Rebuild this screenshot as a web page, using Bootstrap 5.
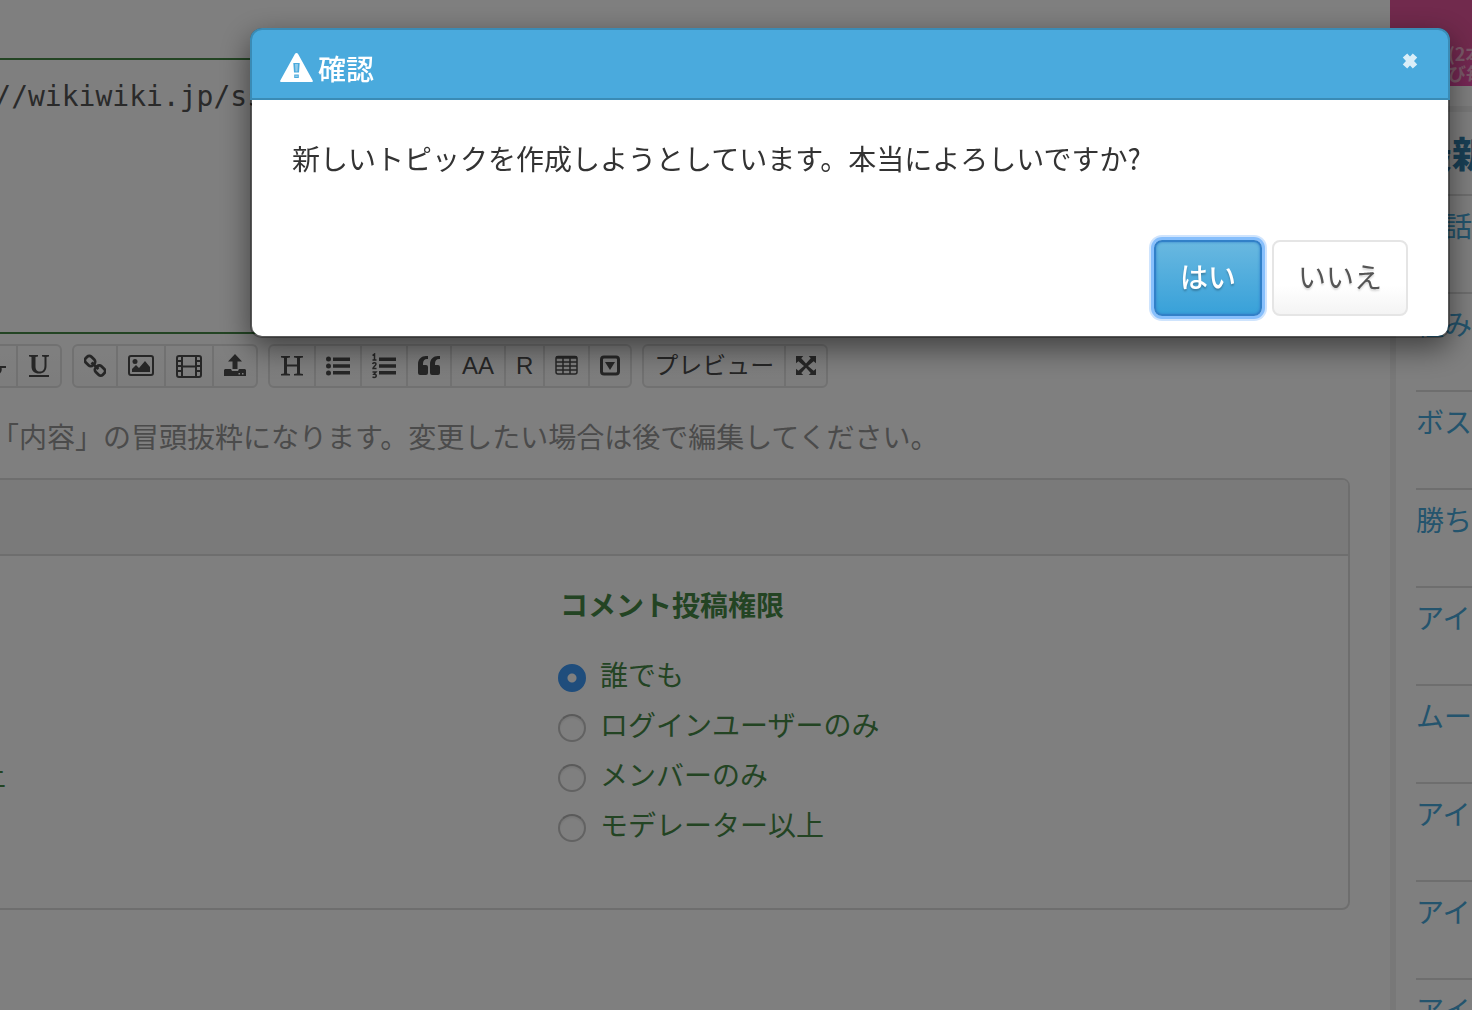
<!DOCTYPE html>
<html lang="ja">
<head>
<meta charset="utf-8">
<meta name="viewport" content="width=device-width, initial-scale=1">
<title>確認</title>
<link href="https://cdn.jsdelivr.net/npm/bootstrap@5.3.0/dist/css/bootstrap.min.css" rel="stylesheet">
<style>
body { font-family: "Noto Sans CJK JP", sans-serif; font-size: 28px; line-height: 40px; color: #333; background: #fff; }
a { color: #48a9db; text-decoration: none; }
.main-col { min-width: 0; margin-left: -300px; padding: 58px 40px 0 0; }
.editor { padding-left: 180px; }
.editor textarea { height: 276px; padding: 17px 28px; border: 2px solid #468847; border-radius: 8px; font-family: "DejaVu Sans Mono", monospace; font-size: 28px; line-height: 40px; color: #555; resize: none; }
.tools { gap: 10px; margin-top: 10px; }
.tools .btn { display: flex; align-items: center; justify-content: center; flex: none; height: 44px; padding: 0 10px; border: 2px solid #e2e2e2; border-radius: 6px; background: linear-gradient(#fff, #fafafa); color: #4d4d4d; font-size: 24px; line-height: 40px; }
.tools .btn-group > .btn:not(:first-child) { margin-left: -2px; }
.tools .preview { padding-bottom: 4px; }
.latin { font-family: "Liberation Sans", sans-serif; }
.hint { margin: 28px 0 22px; padding-left: 27px; color: #969696; white-space: nowrap; }
.perm-panel { border: 2px solid #ddd; border-radius: 8px; }
.perm-panel .card-header { height: 76px; background: #f5f5f5; border-bottom: 2px solid #ddd; }
.perm-panel .card-body { padding: 28px 38px 59px; }
.perm-panel .row { --bs-gutter-x: 66px; }
.perm-panel fieldset, .perm-panel legend { color: #468847; }
.perm-panel legend { font-size: 28px; line-height: 40px; font-weight: 700; margin-bottom: 25px; padding-left: 2px; }
.perm-panel .form-check { display: flex; align-items: center; gap: 14px; height: 50px; min-height: 0; margin: 0; padding: 0; }
.perm-panel .form-check-input { flex: none; float: none; width: 28px; height: 28px; margin: 8px 0 0; border: 2px solid #c4c4c4; border-top-color: #b4b4b4; background: #fff; box-shadow: inset 0 2px 2px #eee; }
.perm-panel .form-check-input:checked { border-color: #3e9af8; background: radial-gradient(circle, #fff 0 4px, #3e9af8 5px) border-box; box-shadow: none; }
.side-col { width: 82px; flex: none; white-space: nowrap; }
.ad-banner { height: 86px; padding: 43px 0 0 58px; background: linear-gradient(#e3549a 50%, #ee4ead); color: #f7b3d3; font-size: 18px; line-height: 20px; font-weight: 700; }
.recent { margin-top: 20px; padding-left: 20px; border: solid #f0f0f0; border-width: 6px 0 0 6px; }
.recent h2 { margin: 0; padding-bottom: 2px; font-size: 36px; line-height: 80px; font-weight: 900; color: #327fac; }
.recent li { height: 98px; padding-top: 9px; border-top: 2px solid #ddd; }
.confirm .modal-dialog { max-width: none; margin: 28px 22px 28px 250px; }
.confirm .modal-content { border: 2px solid rgba(0,0,0,.3); border-radius: 12px; background-clip: padding-box; box-shadow: 0 10px 30px rgba(0,0,0,.5); color: #333; }
.confirm .modal-header { align-items: flex-start; height: 72px; margin: -2px -2px 0; padding: 18px 28px 0; border: 2px solid #3a8bb5; border-radius: 12px 12px 0 0; background: #4aaadd; color: #fff; }
.confirm .modal-title { display: flex; align-items: center; gap: 5px; font-size: 28px; line-height: 40px; font-weight: 500; }
.confirm .dismiss { display: flex; margin-top: 4px; padding: 0; border: 0; background: none; color: #fff; opacity: .8; }
.confirm .modal-body { padding: 38px 40px 40px; }
.confirm .modal-footer { gap: 10px; padding: 22px 40px 20px; border: 0; }
.confirm .modal-footer .btn { height: 76px; margin: 0; padding: 0 24px 4px; border: 2px solid #e5e5e5; border-radius: 8px; font-size: 28px; line-height: 68px; background: linear-gradient(#fff 60%, #f3f3f3) border-box; color: #555; text-shadow: 0 2px 2px rgba(0,0,0,.15); }
.confirm .modal-footer .yes { border-color: #3180c8; background: linear-gradient(#69b8e0, #38a1d9); color: #fff; font-weight: 500; text-shadow: 0 2px 2px rgba(0,0,0,.25); box-shadow: inset 0 0 3px #3180c8, 0 0 0 3px #87bffc, 0 0 0 5px #cfe4fd; }
</style>
</head>
<body class="overflow-hidden vh-100">
<div class="d-flex vh-100 overflow-hidden">
  <main class="main-col flex-grow-1">
    <form>
      <div class="editor">
        <textarea class="form-control" aria-label="内容">http://wikiwiki.jp/ss</textarea>
        <div class="tools d-flex" role="toolbar" aria-label="書式">
          <div class="btn-group">
            <button type="button" class="btn" aria-label="太字"><svg width="22" height="24" viewBox="0 0 22 24" fill="none" stroke="currentColor" stroke-width="4"><path d="M5 3v18h8a4 4 0 0 0 0-9H5h7a4 4 0 0 0 0-9z"/></svg></button>
            <button type="button" class="btn" aria-label="斜体"><svg width="24" height="24" viewBox="0 0 24 24" fill="none" stroke="currentColor" stroke-width="3"><path d="M9 3h8M7 21h8M14 3l-4 18"/></svg></button>
            <button type="button" class="btn" aria-label="取り消し線"><svg width="24" height="24" viewBox="0 0 24 24" fill="none" stroke="currentColor"><path stroke-width="2" d="M0 13h24"/><path stroke-width="3" d="M16 5C14 1 5 1 6 7c1 4 10 4 12 7 2 6-9 9-12 3"/></svg></button>
            <button type="button" class="btn" aria-label="下線"><svg width="22" height="24" viewBox="0 0 22 24"><path fill="currentColor" d="M1 21h20v2H1zM1 1h9v1.500l-2.500.5v9c0 4 1.500 5.500 4.500 5.500s4.500-2 4.500-5.500V3L14 2.500V1h7v1.500L18.500 3v9c0 5-3 7.500-7.500 7.500S3.500 17 3.500 12.500V3L1 2.500z"/></svg></button>
          </div>
          <div class="btn-group">
            <button type="button" class="btn" aria-label="リンク"><svg width="22" height="24" viewBox="0 0 22 24" fill="none" stroke="currentColor" stroke-width="2.800"><rect x="1" y="3" width="10" height="8" rx="3" transform="rotate(45 6 7)"/><rect x="11" y="12.500" width="10" height="8" rx="3" transform="rotate(45 16 16.500)"/><path d="m7.500 8.500 7 6.500"/></svg></button>
            <button type="button" class="btn" aria-label="画像"><svg width="26" height="24" viewBox="0 0 26 24"><rect x="1" y="2" width="24" height="19" rx="2" fill="none" stroke="currentColor" stroke-width="2"/><circle cx="7" cy="7.500" r="2.500" fill="currentColor"/><path fill="currentColor" d="M4 18v-3l4-4 3 3 6-7 5 6v5z"/></svg></button>
            <button type="button" class="btn" aria-label="動画"><svg width="26" height="24" viewBox="0 0 26 24" fill="none" stroke="currentColor" stroke-width="2"><rect x="1" y="2" width="24" height="21" rx="2"/><path d="M6 2v21M20 2v21M6 12.500h14M1 7h5M1 12h5M1 17h5M20 7h5M20 12h5M20 17h5"/></svg></button>
            <button type="button" class="btn" aria-label="アップロード"><svg width="22" height="24" viewBox="0 0 22 24" fill="currentColor"><path d="M11 0l7 7.500h-4.500V15h-5V7.500H4z"/><path fill-rule="evenodd" d="M1 15h6l1 2h6l1-2h6l1 1v6H0v-6zM14.500 19v1.500H16V19zM18 19v1.500h1.500V19z"/></svg></button>
          </div>
          <div class="btn-group">
            <button type="button" class="btn" aria-label="見出し"><svg width="24" height="24" viewBox="0 0 24 24" fill="currentColor"><path d="M1 2h9v1.500L7 4v6.500h10V4l-3-.5V2h9v1.500l-3 .5v15.500l3 .5v1.500h-9V20l3-.5v-7H7v7l3 .5v1.500H1V20l3-.5V4l-3-.5z"/></svg></button>
            <button type="button" class="btn" aria-label="箇条書き"><svg width="24" height="24" viewBox="0 0 24 24" fill="currentColor"><circle cx="2.500" cy="5" r="2.500"/><circle cx="2.500" cy="12" r="2.500"/><circle cx="2.500" cy="19" r="2.500"/><path d="M7 3.500h17v3.500H7zM7 10.300h17v3.500H7zM7 17h17v3.500H7z"/></svg></button>
            <button type="button" class="btn" aria-label="番号付きリスト"><svg width="24" height="26" viewBox="0 0 24 26" fill="currentColor"><path d="M7 4.500h17V8H7zM7 11.300h17v3.500H7zM7 18h17v3.500H7z"/><path fill="none" stroke="currentColor" stroke-width="1.500" d="M.5 2.500 2.500 1v6M.5 7h4M.5 11c1-2 3.500-1.500 3.500 0S1 14 1 15.500h3.500M.5 19H4l-2 2.200c3-.2 3 3.300 0 3.300L.5 24"/></svg></button>
            <button type="button" class="btn" aria-label="引用"><svg width="22" height="24" viewBox="0 0 22 24" fill="currentColor"><path d="M10 2v3H9c-2.500 0-4 1.500-4 5v1h3q2 0 2 2v6q0 2-2 2H2q-2 0-2-2v-9c0-5 3.500-8 8-8z"/><path d="M22 2v3h-1c-2.500 0-4 1.500-4 5v1h3q2 0 2 2v6q0 2-2 2h-6q-2 0-2-2v-9c0-5 3.500-8 8-8z"/></svg></button>
            <button type="button" class="btn latin">AA</button>
            <button type="button" class="btn latin">R</button>
            <button type="button" class="btn" aria-label="表"><svg width="23" height="24" viewBox="0 0 23 24" fill="none" stroke="currentColor" stroke-width="1.500"><rect x="1" y="2.500" width="21" height="17.500" rx="2"/><path stroke-width="2.500" d="M1 3.500h21"/><path d="M1 8h21M1 12h21M1 16h21M8 3v17M15 3v17"/></svg></button>
            <button type="button" class="btn" aria-label="折りたたみ"><svg width="20" height="24" viewBox="0 0 20 24"><rect x="1.500" y="3" width="17" height="17" rx="2.500" fill="none" stroke="currentColor" stroke-width="3"/><path fill="currentColor" d="M5 8h10l-5 8z"/></svg></button>
          </div>
          <div class="btn-group">
            <button type="button" class="btn preview">プレビュー</button>
            <button type="button" class="btn" aria-label="全画面"><svg width="20" height="24" viewBox="0 1 22 24" fill="currentColor"><path d="M0 2h8L5.800 4.500 11 10.200l5.200-5.700L14 2h8v8l-2.600-2.300L13.200 13l6.200 5.300L22 16v7h-8l2.200-2.400L11 15l-5.200 5.600L8 23H0v-7l2.600 2.300L8.800 13 2.600 7.700 0 10z"/></svg></button>
          </div>
        </div>
        <p class="hint">題名は「内容」の冒頭抜粋になります。変更したい場合は後で編集してください。</p>
      </div>
      <div class="card perm-panel">
        <div class="card-header"></div>
        <div class="card-body">
          <div class="row">
            <fieldset class="col-6">
              <legend>閲覧権限</legend>
              <div class="form-check"><input class="form-check-input" type="radio" name="view" id="v1" checked><label for="v1">誰でも</label></div>
              <div class="form-check"><input class="form-check-input" type="radio" name="view" id="v2"><label for="v2">メンバーのみ</label></div>
              <div class="form-check"><input class="form-check-input" type="radio" name="view" id="v3"><label for="v3">モデレーター以上</label></div>
            </fieldset>
            <fieldset class="col-6">
              <legend>コメント投稿権限</legend>
              <div class="form-check"><input class="form-check-input" type="radio" name="post" id="p1" checked><label for="p1">誰でも</label></div>
              <div class="form-check"><input class="form-check-input" type="radio" name="post" id="p2"><label for="p2">ログインユーザーのみ</label></div>
              <div class="form-check"><input class="form-check-input" type="radio" name="post" id="p3"><label for="p3">メンバーのみ</label></div>
              <div class="form-check"><input class="form-check-input" type="radio" name="post" id="p4"><label for="p4">モデレーター以上</label></div>
            </fieldset>
          </div>
        </div>
      </div>
    </form>
  </main>
  <aside class="side-col overflow-hidden">
    <div class="ad-banner">(2本<br>び毎</div>
    <section class="recent">
      <h2>最新</h2>
      <ul class="list-unstyled m-0">
        <li><a href="#">会話</a></li>
        <li><a href="#">組み</a></li>
        <li><a href="#">ボス</a></li>
        <li><a href="#">勝ち</a></li>
        <li><a href="#">アイ</a></li>
        <li><a href="#">ムー</a></li>
        <li><a href="#">アイ</a></li>
        <li><a href="#">アイ</a></li>
        <li><a href="#">アイ</a></li>
      </ul>
    </section>
  </aside>
</div>

<div class="modal-backdrop show"></div>
<div class="modal confirm d-block" role="dialog" aria-modal="true" aria-labelledby="confirmTitle">
  <div class="modal-dialog">
    <div class="modal-content">
      <div class="modal-header">
        <h1 class="modal-title" id="confirmTitle">
          <svg width="33" height="30" viewBox="0 0 33 30" aria-hidden="true"><path fill="#fff" fill-rule="evenodd" d="M16.500 0q1 0 1.600 1l14.600 26.500q.8 1.500-1 1.500H1.300q-1.800 0-1-1.500L14.900 1q.6-1 1.600-1zM13.300 10l.7 9.500h5l.7-9.500zM14.200 21.500V25h4.600v-3.500z"/><path fill="#fff" d="M15 11h3l-.5 7.500h-2zM15.200 22.500h2.600V24h-2.600z" opacity=".4"/></svg>
          確認
        </h1>
        <button type="button" class="dismiss" aria-label="閉じる"><svg width="20" height="18" viewBox="0 0 20 18" fill="none" stroke="currentColor" stroke-width="6" stroke-linejoin="round"><path d="m5 3.500 10 11M15 3.500 5 14.500"/></svg></button>
      </div>
      <div class="modal-body">新しいトピックを作成しようとしています。本当によろしいですか?</div>
      <div class="modal-footer">
        <button type="button" class="btn yes">はい</button>
        <button type="button" class="btn">いいえ</button>
      </div>
    </div>
  </div>
</div>
<script src="https://cdn.jsdelivr.net/npm/bootstrap@5.3.0/dist/js/bootstrap.bundle.min.js"></script>
</body>
</html>
